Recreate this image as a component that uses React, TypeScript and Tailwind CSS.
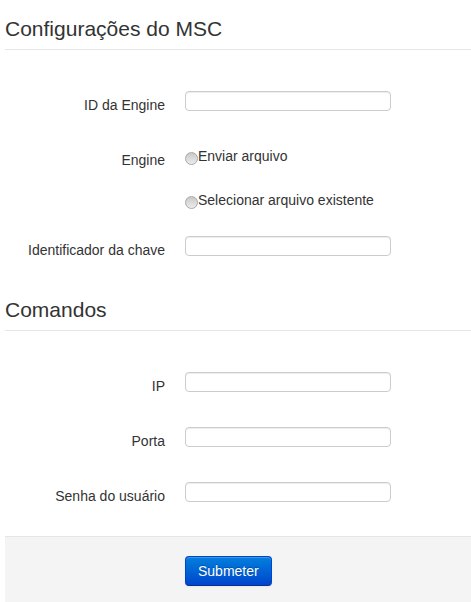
import React from "react";

const font = { fontFamily: '"Liberation Sans", Arial, Helvetica, sans-serif' };

function Legend({ children }: { children: React.ReactNode }) {
  return (
    <div className="text-[21px] leading-[40px] text-[#333] border-b border-[#e5e5e5]">
      {children}
    </div>
  );
}

function InputRow({ label }: { label: string }) {
  return (
    <div className="flex h-[20px]">
      <div className="w-[160px] shrink-0 text-right pt-[4px] text-[14px] leading-[20px] text-[#333] whitespace-nowrap">
        {label}
      </div>
      <div className="ml-[20px]">
        <input
          type="text"
          className="block w-[206px] h-[20px] border border-[#cccccc] rounded-[4px] bg-white px-[6px] text-[14px] outline-none shadow-[inset_0_1px_1px_rgba(0,0,0,0.075)]"
        />
      </div>
    </div>
  );
}

function Radio({ label }: { label: string }) {
  return (
    <div className="flex items-start h-[20px] text-[14px] leading-[20px] text-[#333]">
      <span className="mt-[6px] w-[13px] h-[13px] shrink-0 rounded-full border border-[#a9a9a9] bg-linear-to-b from-[#c9c9c9] to-[#ececec]" />
      <span>{label}</span>
    </div>
  );
}

export default function App() {
  return (
    <div className="w-[471px] min-h-[602px] bg-white pl-[5px] pt-[9px]" style={font}>
      <Legend>Configurações do MSC</Legend>
      <div className="mt-[41px]">
        <InputRow label="ID da Engine" />
      </div>
      <div className="flex mt-[35px]">
        <div className="w-[160px] shrink-0 text-right pt-[4px] text-[14px] leading-[20px] text-[#333]">
          Engine
        </div>
        <div className="ml-[20px] flex flex-col gap-[24px]">
          <Radio label="Enviar arquivo" />
          <Radio label="Selecionar arquivo existente" />
        </div>
      </div>
      <div className="mt-[26px]">
        <InputRow label="Identificador da chave" />
      </div>
      <div className="mt-[34px]">
        <Legend>Comandos</Legend>
      </div>
      <div className="mt-[41px] flex flex-col gap-[35px]">
        <InputRow label="IP" />
        <InputRow label="Porta" />
        <InputRow label="Senha do usuário" />
      </div>
      <div className="mt-[34px] bg-[#f4f4f4] border-t border-[#e5e5e5] pt-[19px] pb-[20px] pl-[180px]">
        <button className="h-[30px] px-[12px] rounded-[4px] border border-[#0044cc] border-b-[#003399] bg-linear-to-b from-[#0a7fdc] to-[#0044cc] text-white text-[14px] leading-[20px] [text-shadow:0_-1px_0_rgba(0,0,0,0.25)] shadow-[inset_0_1px_0_rgba(255,255,255,0.2),0_1px_2px_rgba(0,0,0,0.05)]">
          Submeter
        </button>
      </div>
    </div>
  );
}
